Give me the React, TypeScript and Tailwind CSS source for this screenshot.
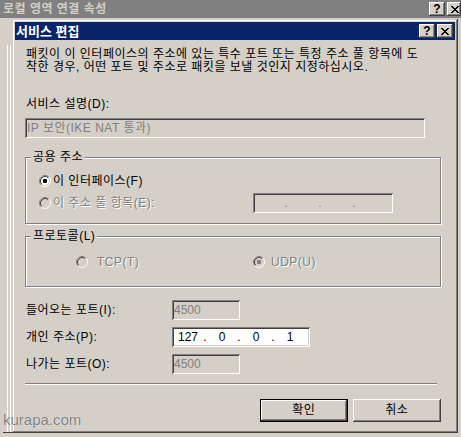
import React from 'react';

const raised =
  'shadow-[inset_-1px_-1px_#404040,inset_1px_1px_#ffffff,inset_-2px_-2px_#808080,inset_2px_2px_#d4d0c8]';
const frame =
  'shadow-[inset_-1px_-1px_#404040,inset_1px_1px_#d4d0c8,inset_-2px_-2px_#808080,inset_2px_2px_#ffffff]';
const sunken =
  'shadow-[inset_1px_1px_#808080,inset_-1px_-1px_#ffffff,inset_2px_2px_#404040,inset_-2px_-2px_#d4d0c8]';
const etched = 'border border-[#808080] shadow-[1px_1px_#ffffff,inset_1px_1px_#ffffff]';
const disabledText = 'text-[#808080] [text-shadow:1px_1px_0_#ffffff]';

function Radio({ checked, disabled }: { checked?: boolean; disabled?: boolean }) {
  const fill = disabled ? '#d4d0c8' : '#ffffff';
  const dot = disabled ? '#808080' : '#000000';
  return (
    <svg width="12" height="12" viewBox="0 0 12 12" className="shrink-0">
      <circle cx="6" cy="6" r="4.5" fill={fill} />
      <path d="M2.11 9.89A5.5 5.5 0 0 1 9.89 2.11" fill="none" stroke="#808080" />
      <path d="M9.89 2.11A5.5 5.5 0 0 1 2.11 9.89" fill="none" stroke="#ffffff" />
      <path d="M2.82 9.18A4.5 4.5 0 0 1 9.18 2.82" fill="none" stroke="#404040" />
      <path d="M9.18 2.82A4.5 4.5 0 0 1 2.82 9.18" fill="none" stroke="#d4d0c8" />
      {checked && <rect x="4" y="4" width="4" height="4" rx="1" fill={dot} />}
    </svg>
  );
}

function CloseGlyph() {
  return (
    <svg width="8" height="7" viewBox="0 0 8 7" shapeRendering="crispEdges">
      <path
        d="M0 0h2v1H0zM6 0h2v1H6zM1 1h2v1H1zM5 1h2v1H5zM2 2h4v1H2zM3 3h2v1H3zM2 4h4v1H2zM1 5h2v1H1zM5 5h2v1H5zM0 6h2v1H0zM6 6h2v1H6z"
        fill="#000000"
      />
    </svg>
  );
}

function CaptionButton({ kind, className = 'w-[16px]' }: { kind: 'help' | 'close'; className?: string }) {
  return (
    <div className={`flex h-[14px] shrink-0 items-center justify-center bg-[#d4d0c8] ${raised} ${className}`}>
      {kind === 'help' ? (
        <span className="font-['Liberation_Sans',sans-serif] text-[12px] leading-[12px] font-bold tracking-normal">?</span>
      ) : (
        <CloseGlyph />
      )}
    </div>
  );
}

function IpField({ parts, disabled }: { parts: string[]; disabled?: boolean }) {
  return (
    <div
      className={`flex h-[20px] items-center pl-[3px] tracking-normal ${sunken} ${
        disabled ? 'w-[140px] bg-[#d4d0c8] text-[#808080]' : 'w-[138px] bg-white'
      }`}
    >
      {parts.map((p, i) => (
        <React.Fragment key={i}>
          {i > 0 && <span className="w-[8px] text-center">.</span>}
          <span className="w-[26px] text-center">{p}</span>
        </React.Fragment>
      ))}
    </div>
  );
}

function Button({ label, isDefault }: { label: string; isDefault?: boolean }) {
  return (
    <div
      className={`h-[23px] ${isDefault ? 'w-[88px] border border-black' : 'w-[89px]'} bg-[#d4d0c8]`}
    >
      <div className={`flex h-full items-center justify-center ${raised}`}>{label}</div>
    </div>
  );
}

export default function App() {
  return (
    <div className="relative h-[437px] w-[461px] overflow-hidden bg-[#d4d0c8] font-['Liberation_Sans','Noto_Sans_CJK_KR',sans-serif] text-[12px] leading-[13px] tracking-[0.5px] text-black">
      {/* background window title */}
      <div className="flex h-[18px] items-center bg-[#808080] pl-[3px]">
        <span className="text-[12px] font-bold text-[#d4d0c8]">로컬 영역 연결 속성</span>
        <div className="ml-auto flex gap-[2px]">
          <CaptionButton kind="help" />
          <CaptionButton kind="close" className="w-[14px] justify-start pl-[4px]" />
        </div>
      </div>

      <div className="mt-[1px] flex">
        <div className="flex w-[12px] shrink-0 flex-col pt-[26px]">
          <div className="ml-[7px] h-[387px] w-[4px] border-x border-white" />
          <div className="ml-[3px] h-px bg-[#404040]" />
        </div>

        {/* 서비스 편집 dialog */}
        <div className={`flex h-[414px] w-[446px] shrink-0 flex-col bg-[#d4d0c8] p-[3px] ${frame}`}>
          <div className="flex h-[18px] items-center bg-[#0a246a] pl-[1px] pr-[2px]">
            <span className="text-[13px] font-bold tracking-normal text-white">서비스 편집</span>
            <div className="ml-auto flex gap-[2px]">
              <CaptionButton kind="help" />
              <CaptionButton kind="close" />
            </div>
          </div>

          <div className="flex flex-col pl-[10px] pr-[14px]">
            <p className="mt-[8px] whitespace-nowrap pl-[1px]">
              패킷이 이 인터페이스의 주소에 있는 특수 포트 또는 특정 주소 풀 항목에 도
              <br />
              착한 경우, 어떤 포트 및 주소로 패킷을 보낼 것인지 지정하십시오.
            </p>

            <div className="mt-[24px] pl-[1px]">서비스 설명(D):</div>
            <div className={`mt-[7px] flex h-[20px] w-[400px] items-center bg-[#d4d0c8] pl-[2px] text-[#808080] ${sunken}`}>
              IP 보안(IKE NAT 통과)
            </div>

            {/* 공용 주소 */}
            <div className={`relative mt-[19px] h-[67px] ${etched}`}>
              <span className="absolute -top-[7px] left-[5px] bg-[#d4d0c8] px-[2px]">공용 주소</span>
              <div className="flex flex-col gap-[2px] pl-[13px] pt-[13px]">
                <div className="flex h-[20px] items-center gap-[2px]">
                  <Radio checked />
                  <span>이 인터페이스(F)</span>
                </div>
                <div className="flex h-[20px] items-center">
                  <div className={`flex w-[214px] items-center gap-[2px] ${disabledText}`}>
                    <Radio disabled />
                    <span>이 주소 풀 항목(E):</span>
                  </div>
                  <IpField parts={['', '', '', '']} disabled />
                </div>
              </div>
            </div>

            {/* 프로토콜 */}
            <div className={`relative mt-[12px] h-[51px] ${etched}`}>
              <span className="absolute -top-[7px] left-[5px] bg-[#d4d0c8] px-[2px]">프로토콜(L)</span>
              <div className={`mt-[15px] flex h-[20px] items-center pl-[50px] ${disabledText}`}>
                <div className="flex w-[177px] items-center gap-[9px]">
                  <Radio disabled />
                  <span>TCP(T)</span>
                </div>
                <div className="flex items-center gap-[6px]">
                  <Radio checked disabled />
                  <span>UDP(U)</span>
                </div>
              </div>
            </div>

            <div className="mt-[13px] flex flex-col gap-[7px]">
              <div className="flex h-[20px] items-center">
                <span className="w-[147px] pl-[1px]">들어오는 포트(I):</span>
                <div className={`flex h-[20px] w-[68px] items-center bg-[#d4d0c8] pl-[2px] tracking-normal text-[#808080] ${sunken}`}>4500</div>
              </div>
              <div className="flex h-[20px] items-center">
                <span className="w-[147px] pl-[1px]">개인 주소(P):</span>
                <IpField parts={['127', '0', '0', '1']} />
              </div>
              <div className="flex h-[20px] items-center">
                <span className="w-[147px] pl-[1px]">나가는 포트(O):</span>
                <div className={`flex h-[20px] w-[68px] items-center bg-[#d4d0c8] pl-[2px] tracking-normal text-[#808080] ${sunken}`}>4500</div>
              </div>
            </div>

            <div className="mr-[4px] mt-[9px] border-b border-t border-b-white border-t-[#808080]" />

            <div className="mt-[14px] flex gap-[5px] pl-[235px]">
              <Button label="확인" isDefault />
              <Button label="취소" />
            </div>
          </div>
        </div>
      </div>

      {/* watermark */}
      <span className="absolute left-[3px] top-[411px] font-['Liberation_Sans',sans-serif] text-[15px] leading-[18px] tracking-normal text-[#7f7f7f] [text-shadow:0_0_1px_#ffffff]">
        kurapa.com
      </span>
    </div>
  );
}
